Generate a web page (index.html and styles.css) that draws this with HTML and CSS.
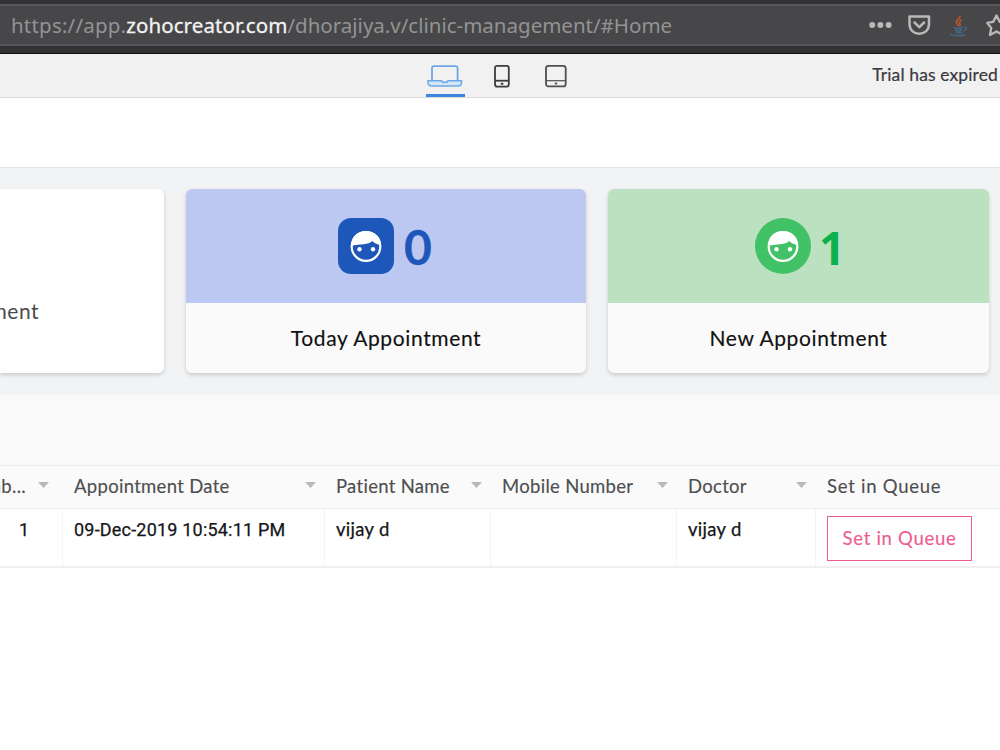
FILE: index.html
```html
<!DOCTYPE html>
<html lang="en">
<head>
<meta charset="utf-8">
<title>Clinic Management</title>
<link rel="stylesheet" href="styles.css">
</head>
<body>
<header class="browser">
  <div class="address">
    <div class="url"><span class="url-start">https://app.</span><span class="url-host">zohocreator.com</span><span class="url-path">/dhorajiya.v/clinic-management/#Home</span></div>
    <svg class="address-icons" width="132" height="38" viewBox="868 6 132 38" fill="none">
      <g fill="#b9b9ba"><circle cx="872.2" cy="25" r="3"/><circle cx="880.4" cy="25" r="3"/><circle cx="888.6" cy="25" r="3"/></g>
      <path d="M909.5 16.5h19.5v7.5c0 13-19.500 13-19.500 0z" stroke="#b9b9ba" stroke-width="2.500" stroke-linejoin="round"/>
      <path d="M914.500 22.500l4.800 4.600 4.800-4.600" stroke="#b9b9ba" stroke-width="2.500" stroke-linecap="round" stroke-linejoin="round"/>
      <path d="M960 15.500c1 3-4 4-3.500 7 .2 1.500 1.500 2 1.700 3.500M962 20c-3 1-3 2.500-2 4 .5 1 0 1.500-.7 2" stroke="#b95427" stroke-width="1.800"/>
      <path d="M954 27c-2 1.500 8 1.500 9 .2M955 30c1 1.500 6 1.300 7 .2M956 33h6M964.500 27c3 .5 2 3-1 3.700M950.500 34c2 2.500 13 2 14.500.4M957 28v5M960 28v5" stroke="#466580" stroke-width="1.600"/>
      <path d="M996.500 15.500l3.300 6.400 7 1-5 5 1.200 7-6.500-3.400-6.500 3.400 1.200-7-4-5 6-1z" stroke="#b9b9ba" stroke-width="2.300" stroke-linejoin="round"/>
    </svg>
  </div>
</header>
<nav class="device-bar">
  <div class="devices">
    <div class="device active">
      <svg width="36" height="24" viewBox="0 0 36 24" fill="none" stroke="#6ba8ea" stroke-width="1.800"><path d="M5 16.500V4.200c0-1.300.7-2 2-2h21.600c1.300 0 2 .7 2 2v12.300"/><path d="M1 16.700h13.500l1 1.500h4.500l1-1.500h13.500v1.500c0 2.500-1.500 3.800-4 3.800H5c-2.500 0-4-1.300-4-3.800z" fill="#d5e6f6" stroke-width="1.500"/></svg>
    </div>
    <div class="device">
      <svg width="16" height="24" viewBox="0 0 16 24" fill="none" stroke="#3b3b3d" stroke-width="1.800"><rect x="1" y="1.800" width="13.800" height="20.800" rx="2"/><path d="M1 16.700h13.800"/><path d="M6.800 19.800h2.500" stroke-width="2"/></svg>
    </div>
    <div class="device">
      <svg width="22" height="24" viewBox="0 0 22 24" fill="none" stroke="#4f4f51" stroke-width="1.800"><rect x="1" y="1.800" width="19.700" height="20.600" rx="2.500"/><path d="M1 16.700h19.700" stroke-width="1.200"/><path d="M9.800 19.500h2.500" stroke-width="1.800"/></svg>
    </div>
  </div>
  <div class="trial">Trial has expired</div>
</nav>
<div class="page-head"></div>
<main class="dashboard">
  <section class="card card-plain"><span>Appointment</span></section>
  <section class="card">
    <div class="card-top blue">
      <svg class="badge" width="56" height="56" viewBox="0 0 56 56"><rect width="56" height="56" rx="13" fill="#1e57ba"/><circle cx="28" cy="28.500" r="14.300" fill="none" stroke="#fff" stroke-width="2.200"/><path d="M13.500 27.500C13 18.500 19.500 13 28 13s15 6 15 14c-3.500-.5-6.500-1.300-8.500-4-4.500 4-12 3.300-21 4.500z" fill="#fff"/><circle cx="21.500" cy="31.300" r="2.200" fill="#fff"/><circle cx="35" cy="31.300" r="2.200" fill="#fff"/></svg>
      <span class="count zero">0</span>
    </div>
    <div class="card-label">Today Appointment</div>
  </section>
  <section class="card">
    <div class="card-top green">
      <svg class="badge" width="56" height="56" viewBox="0 0 56 56"><circle cx="28" cy="28" r="28" fill="#42c266"/><circle cx="28" cy="28.500" r="14.300" fill="none" stroke="#fff" stroke-width="2.200"/><path d="M13.500 27.500C13 18.500 19.500 13 28 13s15 6 15 14c-3.500-.5-6.500-1.300-8.500-4-4.500 4-12 3.300-21 4.500z" fill="#fff"/><circle cx="21.500" cy="31.300" r="2.200" fill="#fff"/><circle cx="35" cy="31.300" r="2.200" fill="#fff"/></svg>
      <span class="count one">1</span>
    </div>
    <div class="card-label">New Appointment</div>
  </section>
</main>
<section class="report">
  <div class="report-head"></div>
  <div class="row head">
    <div class="cell first"><span>Numb...</span><i class="caret"></i></div>
    <div class="cell"><span>Appointment Date</span><i class="caret"></i></div>
    <div class="cell"><span>Patient Name</span><i class="caret"></i></div>
    <div class="cell"><span>Mobile Number</span><i class="caret"></i></div>
    <div class="cell"><span>Doctor</span><i class="caret"></i></div>
    <div class="cell last"><span>Set in Queue</span></div>
  </div>
  <div class="row body">
    <div class="cell number">1</div>
    <div class="cell date">09-Dec-2019 10:54:11 PM</div>
    <div class="cell">vijay d</div>
    <div class="cell"></div>
    <div class="cell">vijay d</div>
    <div class="cell"><button class="queue">Set in Queue</button></div>
  </div>
</section>
</body>
</html>
```
FILE: styles.css
```css
* { box-sizing: border-box; }
body { margin: 0; width: 1000px; height: 750px; overflow: hidden; background: #fff; font-family: Lato, "Open Sans", sans-serif; color: #161618; }
.browser { height: 54px; padding-top: 4px; background: #323234; border-bottom: 1px solid #111; }
.address { height: 42px; display: flex; align-items: center; justify-content: space-between; padding-left: 11px; background: #474749; border-top: 2px solid #58585a; border-bottom: 2px solid #58585a; }
.url { display: flex; white-space: pre; font: 20.5px/38px "Noto Sans", sans-serif; color: #939394; }
.url-start { letter-spacing: .2px; }
.url-host { color: #f2f2f2; letter-spacing: .08px; -webkit-text-stroke: .3px #f2f2f2; }
.address-icons { flex: none; }
.device-bar { height: 44px; display: grid; grid-template-columns: 425.500px 1fr auto; background: #f1f1f1; border-bottom: 1px solid #dadada; }
.devices { grid-column: 2; display: flex; }
.device { height: 43px; padding: 10px 0 0 1px; margin-right: 28px; }
.device.active { width: 39px; border-bottom: 3px solid #3b86dc; }
.device + .device { margin-right: 34px; }
.trial { font-size: 17.500px; line-height: 41px; letter-spacing: .12px; padding-right: 2px; color: #3a3a3e; white-space: nowrap; -webkit-text-stroke: .2px; }
.page-head { height: 70px; border-bottom: 1px solid #e1e3e4; }
.dashboard { height: 227px; display: grid; grid-template-columns: 164px 400px 381px; column-gap: 22px; padding-top: 21px; background: #f2f3f5; align-items: start; }
.card { height: 184px; border-radius: 6px; background: #fafafa; overflow: hidden; box-shadow: 0 2px 4px rgba(0,0,0,.17); }
.card-plain { background: #fff; border-radius: 0 6px 6px 0; display: flex; justify-content: flex-end; padding: 109px 125px 0 0; font-size: 21px; line-height: 26px; letter-spacing: .5px; color: #4a4a4c; }
.card-top { height: 114px; display: flex; align-items: center; justify-content: center; font-size: 46px; font-weight: 700; }
.blue { background: #bdc8f2; color: #1e57ba; }
.green { background: #bce1c1; color: #0db14b; }
.count { line-height: 56px; }
.zero { width: 30px; margin-left: 10px; padding-top: 2px; font-size: 48px; -webkit-text-stroke: .3px; }
.one { width: 23px; margin-left: 8px; padding-top: 2px; font-family: "Open Sans", sans-serif; }
.card-label { height: 70px; line-height: 70px; text-align: center; font-size: 21px; letter-spacing: .62px; color: #111; -webkit-text-stroke: .15px; }
.report-head { height: 70px; background: #fafafa; }
.row { display: grid; grid-template-columns: 62px 262px 166px 186px 139px 185px; }
.head { height: 44px; background: #fafafa; border-top: 1px solid #e9eef1; border-bottom: 1px solid #eceeef; font-size: 18.500px; line-height: 41px; letter-spacing: .3px; color: #4e4e50; -webkit-text-stroke: .15px; }
.cell { padding: 0 12px; white-space: nowrap; }
.head .cell { display: flex; justify-content: space-between; padding-right: 8px; }
.head .first { justify-content: flex-end; gap: 12px; padding: 0 13px 0 0; }
.head .last { letter-spacing: .75px; }
.caret { flex: none; width: 11px; height: 6px; margin-top: 16px; background: #b9b9bb; clip-path: polygon(0 0, 100% 0, 50% 100%); }
.body { height: 59px; border-bottom: 2px solid #f0f0f1; font-size: 18.500px; line-height: 24px; letter-spacing: .3px; -webkit-text-stroke: .25px; }
.body .cell { padding: 8px 11px 0; border-left: 1px solid #f5f5f6; }
.body .cell:first-child { border-left: 0; padding-left: 19px; }
.body .cell:last-child { padding-top: 7px; }
.body .number, .body .date { padding-top: 9px; font-family: Roboto, sans-serif; font-size: 18px; letter-spacing: .2px; }
.queue { display: block; width: 145px; height: 45px; padding: 0 0 2px; background: #fff; border: 1.500px solid #ee5c91; color: #ee5c91; font: 18.500px Lato, sans-serif; letter-spacing: .7px; -webkit-text-stroke: .15px; }
```
